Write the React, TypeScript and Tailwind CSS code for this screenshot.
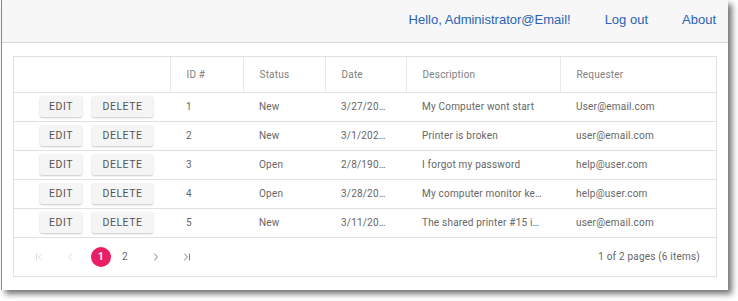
import React from "react";
import { ChevronFirst, ChevronLast, ChevronLeft, ChevronRight } from "lucide-react";

type Ticket = {
  id: number;
  status: string;
  date: string;
  description: string;
  requester: string;
};

const tickets: Ticket[] = [
  { id: 1, status: "New", date: "3/27/2020 9:14 AM", description: "My Computer wont start", requester: "User@email.com" },
  { id: 2, status: "New", date: "3/1/2020 2:30 PM", description: "Printer is broken", requester: "user@email.com" },
  { id: 3, status: "Open", date: "2/8/1900 12:00 AM", description: "I forgot my password", requester: "help@user.com" },
  { id: 4, status: "Open", date: "3/28/2020 11:02 AM", description: "My computer monitor keeps flickering", requester: "help@user.com" },
  { id: 5, status: "New", date: "3/11/2020 4:45 PM", description: "The shared printer #15 is out of toner", requester: "user@email.com" },
];

function ActionButton({ label, width }: { label: string; width: string }) {
  return (
    <button
      className={`${width} h-[21px] rounded-[2px] bg-[#f5f5f5] text-[10.5px] tracking-[0.05em] text-[#555] shadow-[0_1px_2px_rgba(0,0,0,0.22)]`}
    >
      {label}
    </button>
  );
}

export default function App() {
  return (
    <div className="w-[738px] h-[301px] bg-white overflow-hidden font-['Roboto',sans-serif]">
      <div className="w-[727px] h-[290px] ml-px border-l border-[#888] bg-white shadow-[4px_4px_6px_rgba(0,0,0,0.55)] flex flex-col">
        <header className="h-[43px] bg-[#f7f7f7] border-b border-[#d4d4d4] flex items-center justify-end pr-[12px] pb-[2px] gap-[34px] font-['Liberation_Sans',sans-serif] text-[13px] text-[#2a62b8]">
          <span>Hello, Administrator@Email!</span>
          <span>Log out</span>
          <span>About</span>
        </header>

        <div className="mt-[13px] ml-[11px] w-[704px] border border-[#e0e0e0]">
          <table className="w-full table-fixed border-collapse text-[10px] tracking-[0.02em] text-[#666]">
            <colgroup>
              <col className="w-[156px]" />
              <col className="w-[73px]" />
              <col className="w-[82px]" />
              <col className="w-[81px]" />
              <col className="w-[154px]" />
              <col />
            </colgroup>
            <thead>
              <tr className="h-[35px] border-b border-[#e0e0e0] text-[#808080]">
                <th />
                <th className="border-l border-[#e8e8e8] text-left font-normal pl-[16px]">ID #</th>
                <th className="border-l border-[#e8e8e8] text-left font-normal pl-[16px]">Status</th>
                <th className="border-l border-[#e8e8e8] text-left font-normal pl-[16px]">Date</th>
                <th className="border-l border-[#e8e8e8] text-left font-normal pl-[16px]">Description</th>
                <th className="border-l border-[#e8e8e8] text-left font-normal pl-[16px]">Requester</th>
              </tr>
            </thead>
            <tbody>
              {tickets.map((t) => (
                <tr key={t.id} className="h-[29px] border-b border-[#e0e0e0]">
                  <td className="pl-[26px]">
                    <div className="flex gap-[10px] tracking-normal">
                      <ActionButton label="EDIT" width="w-[42px]" />
                      <ActionButton label="DELETE" width="w-[61px]" />
                    </div>
                  </td>
                  <td className="pl-[16px]">{t.id}</td>
                  <td className="pl-[16px]">{t.status}</td>
                  <td className="pl-[16px] pr-[19px] truncate">{t.date}</td>
                  <td className="pl-[16px] pr-[17px] truncate">{t.description}</td>
                  <td className="pl-[16px] pr-[12px] truncate">{t.requester}</td>
                </tr>
              ))}
            </tbody>
          </table>

          <div className="h-[38px] flex items-center justify-between pl-[9px] pr-[16px] text-[10px] tracking-[0.02em] text-[#666]">
            <div className="flex items-center">
              <span className="w-[31px] flex justify-center text-[#cfcfcf]">
                <ChevronFirst size={12} strokeWidth={1.5} />
              </span>
              <span className="w-[31px] flex justify-center text-[#cfcfcf]">
                <ChevronLeft size={12} strokeWidth={1.5} />
              </span>
              <span className="w-[20px] h-[20px] rounded-full bg-[#e91e63] text-white font-bold flex items-center justify-center ml-[6px] mr-[4px]">
                1
              </span>
              <span className="w-[20px] text-center">2</span>
              <span className="w-[42px] flex justify-center text-[#555]">
                <ChevronRight size={12} strokeWidth={1.5} />
              </span>
              <span className="w-[20px] flex justify-center text-[#555]">
                <ChevronLast size={12} strokeWidth={1.5} />
              </span>
            </div>
            <span>1 of 2 pages (6 items)</span>
          </div>
        </div>
      </div>
    </div>
  );
}
